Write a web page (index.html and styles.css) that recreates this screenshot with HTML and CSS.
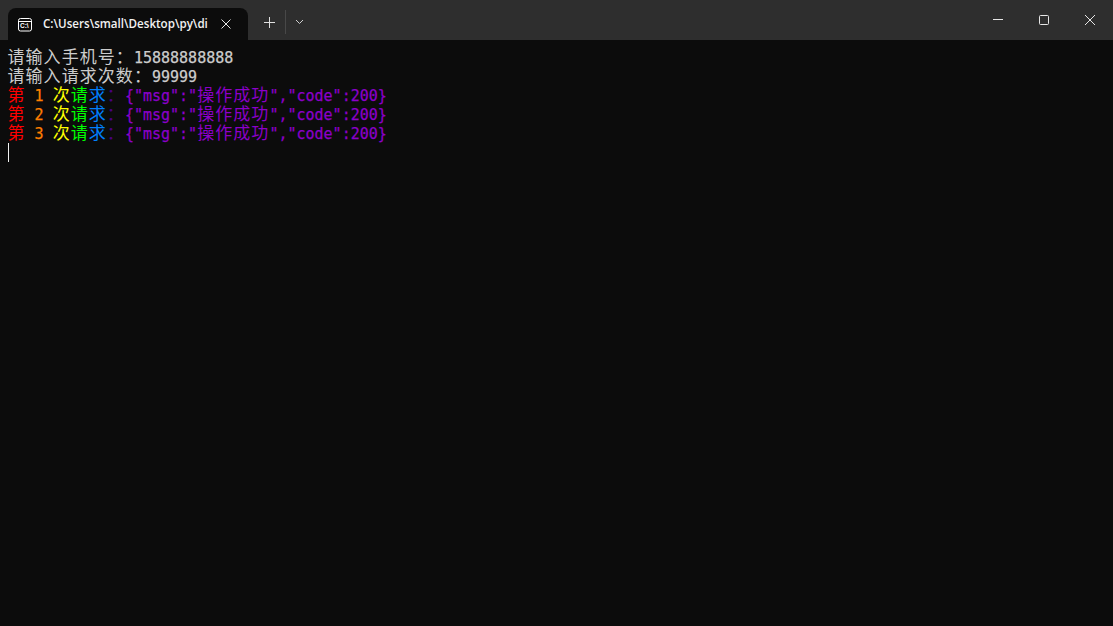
FILE: index.html
```html
<!DOCTYPE html>
<html lang="zh">
<head>
<meta charset="utf-8">
<title>Terminal</title>
<link rel="stylesheet" href="styles.css">
</head>
<body>
<div class="window">
  <header class="titlebar">
    <div class="tab">
      <svg class="tab-icon" width="15" height="15" viewBox="0 0 15 15" fill="none" stroke="#fff" stroke-width="1"><rect x=".5" y="1.5" width="13" height="12.5" rx="2"/><path d="M.5 4.5h13"/><text x="2" y="11.4" class="tab-icon-text">C:\</text></svg>
      <span class="tab-title">C:\Users\small\Desktop\py\di</span>
      <svg class="tab-close" width="10" height="10" viewBox="0 0 10 10" stroke="#e6e6e6" stroke-width="1"><path d="M.5.5l9 9M9.5.5l-9 9"/></svg>
    </div>
    <div class="tab-actions">
      <svg width="11" height="11" viewBox="0 0 11 11" stroke="#e0e0e0" stroke-width="1"><path d="M5.5 0v11M0 5.5h11"/></svg>
      <span class="divider"></span>
      <svg width="9" height="6" viewBox="0 0 9 6" fill="none" stroke="#d0d0d0" stroke-width="1"><path d="M1 1l3.5 3.5L8 1"/></svg>
    </div>
    <div class="controls">
      <button class="ctl"><svg width="10" height="10" viewBox="0 0 10 10" stroke="#e6e6e6"><path d="M0 4.5h10"/></svg></button>
      <button class="ctl"><svg width="10" height="10" viewBox="0 0 10 10" fill="none" stroke="#e6e6e6"><rect x=".5" y=".5" width="9" height="9" rx="1"/></svg></button>
      <button class="ctl"><svg width="10" height="10" viewBox="0 0 10 10" stroke="#e6e6e6"><path d="M0 0l10 10M10 0L0 10"/></svg></button>
    </div>
  </header>
  <main class="console">
    <div class="line"><span class="cjk">请输入手机号：</span>15888888888</div>
    <div class="line"><span class="cjk">请输入请求次数：</span>99999</div>
    <div class="line"><span class="cjk red">第</span> <span class="orange">1</span> <span class="cjk yellow">次</span><span class="cjk green">请</span><span class="cjk blue">求</span><span class="cjk indigo">：</span><span class="purple">{"msg":"<span class="cjk">操作成功</span>","code":200}</span></div>
    <div class="line"><span class="cjk red">第</span> <span class="orange">2</span> <span class="cjk yellow">次</span><span class="cjk green">请</span><span class="cjk blue">求</span><span class="cjk indigo">：</span><span class="purple">{"msg":"<span class="cjk">操作成功</span>","code":200}</span></div>
    <div class="line"><span class="cjk red">第</span> <span class="orange">3</span> <span class="cjk yellow">次</span><span class="cjk green">请</span><span class="cjk blue">求</span><span class="cjk indigo">：</span><span class="purple">{"msg":"<span class="cjk">操作成功</span>","code":200}</span></div>
    <div class="line"><span class="cursor"></span></div>
  </main>
</div>
</body>
</html>
```
FILE: styles.css
```css
html, body { margin: 0; height: 100%; background: #0c0c0c; overflow: hidden; }
.window { display: flex; flex-direction: column; height: 626px; }
.titlebar { display: flex; align-items: flex-end; height: 40px; background: #2e2e2e; flex: none; }
.tab { display: flex; align-items: center; width: 240px; height: 32px; margin-left: 8px; background: #0c0c0c; border-radius: 8px 8px 0 0; box-sizing: border-box; padding: 0 17px 0 10px; }
.tab-icon { flex: none; }
.tab-icon-text { font: 700 6.5px "Liberation Sans", sans-serif; fill: #fff; stroke: none; }
.tab-title { font: 600 11.6px/16px "Open Sans", "Liberation Sans", sans-serif; color: #f2f2f2; margin-left: 10px; white-space: nowrap; }
.tab-close { margin-left: auto; flex: none; }
.tab-actions { display: flex; align-items: center; height: 32px; padding-bottom: 4px; box-sizing: border-box; margin-left: 16px; }
.divider { width: 1px; height: 24px; background: #484848; margin: 0 9px 0 10px; }
.controls { display: flex; margin-left: auto; align-self: flex-start; }
.ctl { width: 46px; height: 40px; padding: 0; border: 0; background: none; display: flex; align-items: center; justify-content: center; }
.console { flex: 1; padding: 9px 8px 0 7.5px; font: 15px "DejaVu Sans Mono", monospace; color: #cccccc; -webkit-text-stroke: 0.25px currentColor; }
.line { height: 19px; line-height: 19px; white-space: pre; }
.cjk { font-family: "Noto Sans CJK SC", sans-serif; font-size: 17px; letter-spacing: 1.06px; line-height: 0; -webkit-text-stroke: 0; }
.red { color: #ff0000; }
.orange { color: #ff7f00; }
.yellow { color: #ffff00; }
.green { color: #00ff00; }
.blue { color: #0080ff; }
.indigo { color: #4b0082; }
.purple { color: #8b00c9; }
.cursor { display: block; width: 1px; height: 19px; margin: -1px 0 0 0.5px; background: #f2f2f2; }
```
